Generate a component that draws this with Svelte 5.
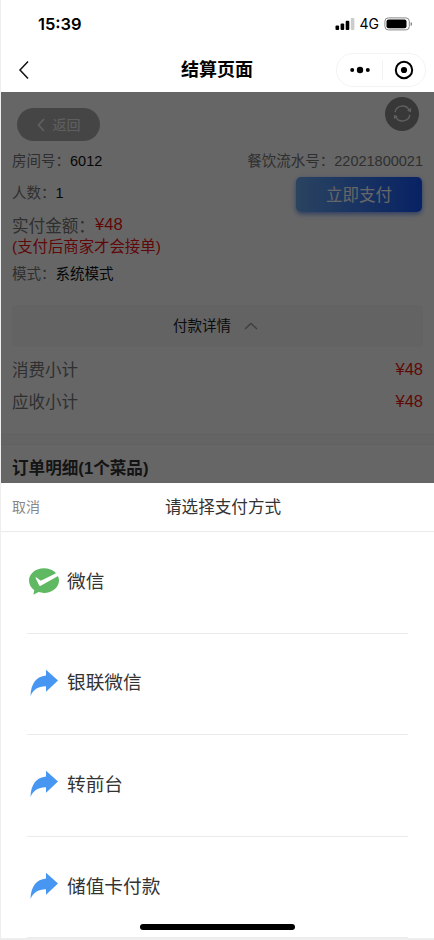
<script lang="ts">
  const payMethods = [
    { id: 'wechat', name: '微信', icon: 'wechat' },
    { id: 'union', name: '银联微信', icon: 'share' },
    { id: 'desk', name: '转前台', icon: 'share' },
    { id: 'card', name: '储值卡付款', icon: 'share' }
  ];

  const totals = [
    { label: '消费小计', amount: 48 },
    { label: '应收小计', amount: 48 }
  ];
</script>

<div class="phone">
  <header class="status-bar">
    <span class="time">15:39</span>
    <div class="status-icons">
      <svg width="20" height="14" viewBox="0 0 20 14">
        <rect x="0.5" y="8.5" width="3.6" height="4.5" rx="1" />
        <rect x="5.6" y="6.5" width="3.6" height="6.5" rx="1" />
        <rect x="10.7" y="3.8" width="3.6" height="9.2" rx="1" />
        <rect x="15.8" y="1" width="3.6" height="12" rx="1" fill="#ccc" />
      </svg>
      <span class="network">4G</span>
      <svg width="29" height="14" viewBox="0 0 29 14">
        <rect x="0.9" y="0.9" width="24.4" height="12" rx="3.4" fill="none" stroke="#888" />
        <rect x="2.5" y="2.5" width="20" height="8.8" rx="2" />
        <path d="M26.6 5v4c1-.3 1.5-1 1.5-2s-.5-1.7-1.5-2z" fill="#888" />
      </svg>
    </div>
  </header>

  <nav class="nav-bar">
    <svg class="nav-back" width="12" height="20" viewBox="0 0 12 20">
      <path d="M10 1.5 2 10l8 8.5" fill="none" stroke="#111" stroke-width="1.5" />
    </svg>
    <h1>结算页面</h1>
    <div class="capsule">
      <svg width="20" height="8" viewBox="0 0 20 8">
        <circle cx="2.2" cy="4" r="2" />
        <circle cx="10" cy="4" r="3.2" />
        <circle cx="17.8" cy="4" r="2" />
      </svg>
      <i></i>
      <svg width="20" height="20" viewBox="0 0 20 20">
        <circle cx="10" cy="10" r="8.2" fill="none" stroke="#000" stroke-width="2" />
        <circle cx="10" cy="10" r="3.1" />
      </svg>
    </div>
  </nav>

  <main class="page">
    <section class="summary">
      <div class="top-row">
        <button class="back-btn">
          <svg width="8" height="14" viewBox="0 0 8 14">
            <path d="M7 1 1.5 7 7 13" fill="none" stroke="currentColor" stroke-width="1.8" />
          </svg>
          <span>返回</span>
        </button>
        <button class="refresh-btn" aria-label="刷新">
          <svg width="19" height="19" viewBox="0 0 20 20">
            <path d="M2.2 8.5A8 8 0 0 1 17 6.2M17.8 11.5A8 8 0 0 1 3 13.8" fill="none" stroke="currentColor" stroke-width="1.5" />
            <path d="M19 4v4.6l-4.2-1.5zM1 16v-4.6l4.2 1.5z" fill="currentColor" />
          </svg>
        </button>
      </div>
      <div class="line room">
        <span>房间号：<b>6012</b></span>
        <span>餐饮流水号：22021800021</span>
      </div>
      <div class="line people">
        <span class="count">人数：<b>1</b></span>
        <button class="pay-btn">立即支付</button>
      </div>
      <div class="line paid">实付金额：<em>¥48</em></div>
      <div class="line tip">(支付后商家才会接单)</div>
      <div class="line mode"><span>模式：<b>系统模式</b></span></div>

      <div class="detail-toggle">
        <span>付款详情</span>
        <svg width="14" height="8" viewBox="0 0 14 8">
          <path d="M1 7l6-5.5L13 7" fill="none" stroke="#999" stroke-width="1.3" />
        </svg>
      </div>
      {#each totals as total}
        <div class="line total">
          <span>{total.label}</span>
          <em>¥{total.amount}</em>
        </div>
      {/each}
    </section>
    <div class="gap"></div>
    <h2>订单明细(1个菜品)</h2>
    <div class="mask"></div>
  </main>

  <section class="sheet">
    <div class="sheet-head">
      <span class="cancel">取消</span>
      <span class="sheet-title">请选择支付方式</span>
    </div>
    <ul>
      {#each payMethods as method (method.id)}
        <li>
          {#if method.icon === 'wechat'}
            <svg width="32" height="28" viewBox="0 0 32 28">
              <path d="M16 1.2c8.300 0 15 5.500 15 12.300S24.300 25.900 16 25.900c-1.900 0-3.700-.3-5.400-.8L5.400 27.700l.9-4.500C3 20.900 1 17.400 1 13.500 1 6.700 7.700 1.200 16 1.200z" fill="#5fb963" />
              <path d="M7.600 11l3.500 7.300c.4.700 1 .8 1.600.5L31 8.500 29 5.700 13.300 13.400c-.4.200-.8.200-1.200-.1L8.500 10.500c-.6-.4-1.100 0-.9.500z" fill="#fff" />
            </svg>
          {:else}
            <svg width="32" height="28" viewBox="0 0 32 28">
              <path d="M18 .8v5.600C8.500 7.400 2.900 14 2.500 27c2.800-6.200 7.500-9.800 15.500-9.700v5.500L30 11.600z" fill="#4797f2" />
            </svg>
          {/if}
          <span>{method.name}</span>
        </li>
      {/each}
    </ul>
    <div class="home-indicator"></div>
  </section>
</div>

<style>
  :global(body) {
    background: #fff;
  }

  .phone {
    box-sizing: border-box;
    width: 434px;
    height: 940px;
    border-left: 1px solid #eee;
    border-bottom: 2px solid #eee;
    display: flex;
    flex-direction: column;
    overflow: hidden;
    background: #fff;
    color: #000;
    font-family: "Liberation Sans", "Noto Sans CJK SC", sans-serif;
  }

  button {
    border: none;
    padding: 0;
    font-family: inherit;
  }

  .status-bar {
    height: 47px;
    flex: none;
    box-sizing: border-box;
    padding: 0 21px 0 37px;
    display: flex;
    align-items: center;
    justify-content: space-between;
  }

  .time {
    font-family: Inter, sans-serif;
    font-size: 16.5px;
    font-weight: 600;
  }

  .status-icons {
    display: flex;
    align-items: center;
  }

  .network {
    font-family: Inter, sans-serif;
    font-size: 14px;
    margin: 0 5px 0 5px;
  }

  .nav-bar {
    height: 45px;
    flex: none;
    box-sizing: border-box;
    padding: 0 8px 0 17px;
    display: grid;
    grid-template-columns: 163px auto 1fr;
    align-items: center;
  }

  h1 {
    margin: 0;
    font-size: 18px;
    line-height: 26px;
    font-weight: 600;
  }

  .capsule {
    justify-self: end;
    box-sizing: border-box;
    width: 90px;
    height: 34px;
    border: 1px solid #f3f3f3;
    border-radius: 17px;
    display: flex;
    align-items: center;
    justify-content: space-between;
    padding: 0 11px 0 13px;
  }

  .capsule i {
    width: 1px;
    height: 20px;
    background: #f3f3f3;
  }

  .page {
    position: relative;
    height: 391px;
    flex: none;
    overflow: hidden;
    color: #777;
    font-size: 14.5px;
  }

  .mask {
    position: absolute;
    inset: 0;
    background: rgba(0, 0, 0, 0.6);
  }

  .summary {
    height: 342px;
    box-sizing: border-box;
    padding: 5px 11px 0;
  }

  .top-row {
    height: 46px;
    padding: 0 4px 0 5px;
    display: flex;
    justify-content: space-between;
    align-items: flex-start;
  }

  .back-btn {
    width: 83px;
    height: 33px;
    margin-top: 11px;
    border-radius: 17px;
    background: #adadad;
    color: #eee;
    font-size: 14px;
    display: flex;
    align-items: center;
    justify-content: center;
    gap: 8px;
  }

  .back-btn span {
    padding-bottom: 2px;
  }

  .refresh-btn {
    width: 34px;
    height: 34px;
    border-radius: 50%;
    background: #8c8c8c;
    color: #eee;
    display: grid;
    place-items: center;
  }

  .refresh-btn svg {
    margin-bottom: 2px;
  }

  .line {
    display: flex;
    align-items: center;
    justify-content: space-between;
    white-space: nowrap;
  }

  b {
    font-weight: 400;
    color: #111;
  }

  em {
    font-style: normal;
    color: #f01414;
  }

  .room {
    height: 32px;
  }

  .people {
    height: 37px;
  }

  .count {
    padding-bottom: 4px;
  }

  .pay-btn {
    width: 126px;
    height: 35px;
    margin: 2px 1px 0 0;
    padding-bottom: 2px;
    border-radius: 5px;
    background: linear-gradient(90deg, #69a8f0, #1456fa);
    box-shadow: 0 2px 5px rgba(50, 110, 240, 0.7);
    color: #fff;
    font-size: 16.5px;
  }

  .paid {
    height: 24px;
    margin-top: 1px;
    justify-content: flex-start;
    font-size: 16.6px;
  }

  .tip {
    height: 15px;
    font-size: 15.4px;
    color: #f01414;
  }

  .mode {
    height: 40px;
  }

  .detail-toggle {
    height: 42px;
    margin: 13px 0 6px;
    padding-right: 4px;
    box-sizing: border-box;
    border-radius: 4px;
    background: #f7f7f7;
    color: #222;
    display: flex;
    align-items: center;
    justify-content: center;
    gap: 13px;
  }

  .detail-toggle span {
    padding-bottom: 3px;
  }

  .total {
    height: 32px;
    font-size: 16.5px;
  }

  .gap {
    height: 9px;
    background: #fafafa;
    border-top: 1px solid #f2f2f2;
    border-bottom: 1px solid #f2f2f2;
  }

  h2 {
    margin: 0;
    padding: 11px 11px 0;
    font-size: 16.6px;
    line-height: 26px;
    font-weight: 600;
    color: #333;
  }

  .sheet {
    flex: 1;
    min-height: 0;
    position: relative;
    overflow: hidden;
    color: #333;
  }

  .sheet-head {
    box-sizing: border-box;
    height: 49px;
    border-bottom: 1px solid #ebebeb;
    padding: 0 11px 2px;
    display: grid;
    grid-template-columns: 153px auto;
    align-items: center;
  }

  .cancel {
    font-size: 14px;
    color: #888;
  }

  .sheet-title {
    font-size: 16.6px;
  }

  ul {
    list-style: none;
    margin: 0;
    padding: 0 26px;
  }

  li {
    box-sizing: border-box;
    height: 101.6px;
    border-bottom: 1px solid #ebebeb;
    padding: 0 0 2px 1px;
    display: flex;
    align-items: center;
    gap: 7px;
    font-size: 18.7px;
  }

  li span {
    padding-bottom: 4px;
  }

  .home-indicator {
    position: absolute;
    left: 139px;
    bottom: 8px;
    width: 155px;
    height: 6px;
    border-radius: 3px;
    background: #000;
  }
</style>
